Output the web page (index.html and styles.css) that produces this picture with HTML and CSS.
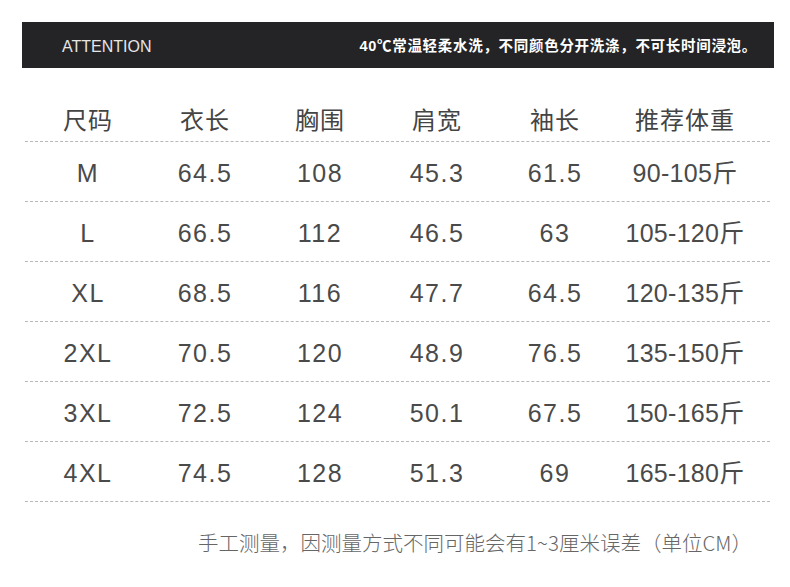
FILE: index.html
```html
<!DOCTYPE html>
<html lang="zh-CN">
<head>
<meta charset="utf-8">
<title>尺码表</title>
<link rel="stylesheet" href="styles.css">
</head>
<body>
<div class="page">
  <div class="banner">
    <span class="banner-title">ATTENTION</span>
    <span class="banner-note">40℃常温轻柔水洗，不同颜色分开洗涤，不可长时间浸泡。</span>
  </div>
  <div class="table">
    <div class="row head">
      <span>尺码</span><span>衣长</span><span>胸围</span><span>肩宽</span><span>袖长</span><span>推荐体重</span>
    </div>
    <div class="row">
      <span>M</span><span>64.5</span><span>108</span><span>45.3</span><span>61.5</span><span class="weight">90-105斤</span>
    </div>
    <div class="row">
      <span>L</span><span>66.5</span><span>112</span><span>46.5</span><span>63</span><span class="weight">105-120斤</span>
    </div>
    <div class="row">
      <span>XL</span><span>68.5</span><span>116</span><span>47.7</span><span>64.5</span><span class="weight">120-135斤</span>
    </div>
    <div class="row">
      <span>2XL</span><span>70.5</span><span>120</span><span>48.9</span><span>76.5</span><span class="weight">135-150斤</span>
    </div>
    <div class="row">
      <span>3XL</span><span>72.5</span><span>124</span><span>50.1</span><span>67.5</span><span class="weight">150-165斤</span>
    </div>
    <div class="row">
      <span>4XL</span><span>74.5</span><span>128</span><span>51.3</span><span>69</span><span class="weight">165-180斤</span>
    </div>
  </div>
  <p class="footnote">手工测量，因测量方式不同可能会有1~3厘米误差（单位CM）</p>
</div>
</body>
</html>
```
FILE: styles.css
```css
html, body {
  margin: 0;
  padding: 0;
  background: #ffffff;
}

.page {
  width: 790px;
  height: 587px;
  padding-top: 22px;
  box-sizing: border-box;
  font-family: "Liberation Sans", "Noto Sans CJK SC", sans-serif;
}

.banner {
  margin: 0 16px 0 22px;
  height: 46px;
  background: #242426;
  display: flex;
  align-items: center;
  justify-content: space-between;
  padding: 3px 17px 0 40px;
  box-sizing: border-box;
}

.banner-title {
  font-family: "Liberation Sans", sans-serif;
  font-size: 16px;
  line-height: 1;
  color: #e6e6e6;
}

.banner-note {
  font-family: "Liberation Sans", "Noto Sans CJK SC", sans-serif;
  font-size: 14.5px;
  line-height: 1;
  font-weight: bold;
  color: #ffffff;
  letter-spacing: 0.7px;
}

.table {
  margin: 21px 20px 0 25px;
}

.row {
  display: grid;
  grid-template-columns: 126px 108px 122px 112px 124px 136px;
  padding-right: 17px;
  height: 60px;
  align-items: center;
  padding-top: 4px;
  box-sizing: border-box;
  border-bottom: 1px dashed #b8b8b8;
  font-size: 25px;
  line-height: 1;
  color: #4a4a4a;
  letter-spacing: 1.5px;
}

.row span {
  text-align: center;
  line-height: 1;
}

.row .weight {
  letter-spacing: 0.3px;
}

.row.head {
  height: 53px;
  padding-top: 8px;
  font-family: "Noto Sans CJK SC", sans-serif;
  font-size: 24px;
  letter-spacing: 1px;
  color: #444444;
}

.footnote {
  margin: 30px 38px 0 0;
  text-align: right;
  font-family: "Noto Sans CJK SC", sans-serif;
  font-weight: 300;
  font-size: 20.5px;
  line-height: 1;
  color: #666666;
}
```
